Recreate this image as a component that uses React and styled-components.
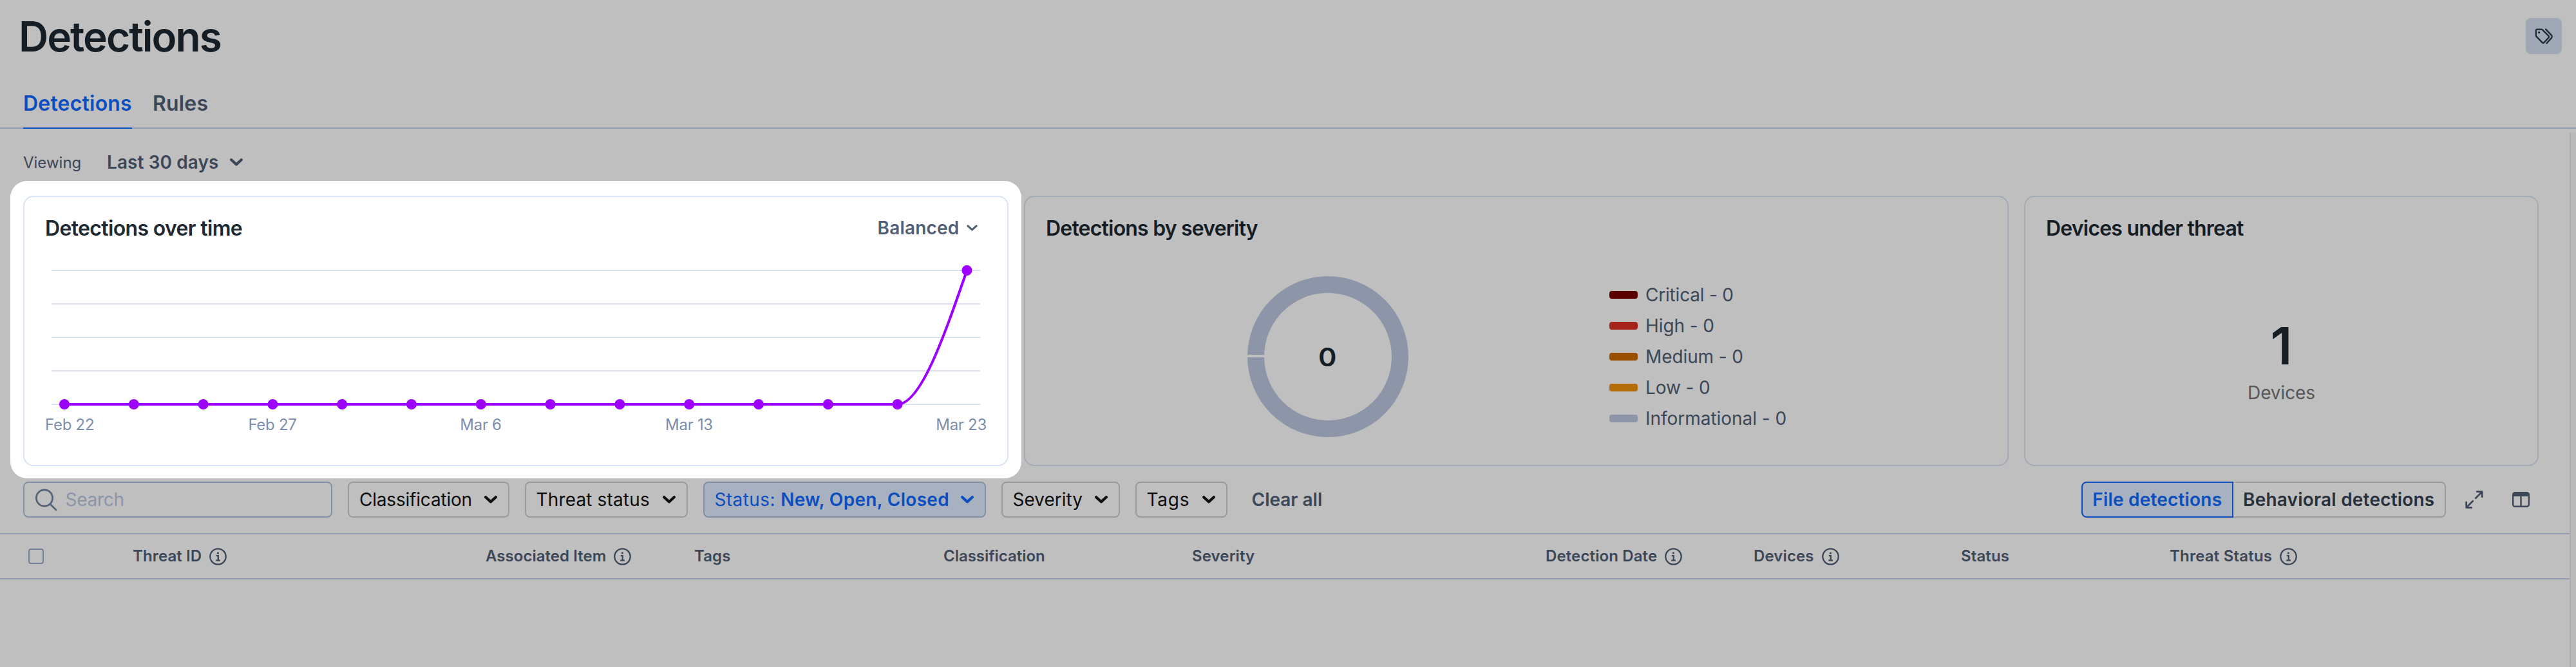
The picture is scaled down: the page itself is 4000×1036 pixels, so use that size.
import React from "react";
import styled, { createGlobalStyle } from "styled-components";

const color = {
  ink: "#1e2932",
  slate: "#516075",
  muted: "#7c8ead",
  blue: "#0f69ff",
  blueTint: "#e1edff",
  line: "#c4d3eb",
  cardLine: "#d8e3f3",
  violet: "#9c00ff",
};

const GlobalStyle = createGlobalStyle`
  * { box-sizing: border-box; }
  body {
    margin: 0;
    background: #fff;
    font-family: Inter, "Liberation Sans", sans-serif;
    color: ${color.ink};
    overflow: hidden;
  }
`;

const Page = styled.div`
  position: relative;
  width: 4000px;
  height: 1036px;
  overflow: hidden;
  display: flex;
  flex-direction: column;
`;

const Spotlight = styled.div`
  position: absolute;
  left: 16px;
  top: 281px;
  width: 1570px;
  height: 462px;
  border-radius: 26px;
  box-shadow: 0 0 0 5000px rgba(0, 0, 0, 0.25);
  pointer-events: none;
`;

const Header = styled.header`
  display: flex;
  align-items: center;
  justify-content: space-between;
  height: 112px;
  padding: 0 22px 0 29px;
`;

const Title = styled.h1`
  margin: 1px 0 0;
  font-size: 64px;
  line-height: 78px;
  font-weight: 600;
  letter-spacing: -2px;
`;

const TagButton = styled.button`
  display: flex;
  align-items: center;
  justify-content: center;
  width: 56px;
  height: 56px;
  padding: 0;
  border: 0;
  border-radius: 8px;
  background: #d4e0f0;
  color: #2f3b49;
`;

const Tabs = styled.nav`
  display: flex;
  gap: 32px;
  height: 88px;
  padding: 0 36px;
  box-shadow: inset 0 -2px ${color.line};
`;

const Tab = styled.a`
  display: flex;
  align-items: center;
  padding-top: 10px;
  border-bottom: 2px solid ${(p) => (p.$active ? color.blue : "transparent")};
  color: ${(p) => (p.$active ? color.blue : color.slate)};
  font-size: 32px;
  font-weight: 600;
  letter-spacing: 0.2px;
`;

const Body = styled.div`
  display: flex;
  flex: 1;
`;

const Main = styled.main`
  width: 3990px;
`;

const ScrollTrack = styled.div`
  flex: 1;
  margin-top: 6px;
  border-left: 2px solid #e8e8e8;
  background: #fafafa;
`;

const ViewingBar = styled.div`
  display: flex;
  align-items: center;
  height: 104px;
  padding-left: 36px;
  color: ${color.slate};
`;

const ViewingLabel = styled.span`
  width: 130px;
  font-size: 24px;
`;

const RangeSelect = styled.div`
  display: flex;
  align-items: center;
  gap: 18px;
  font-size: 28px;
  font-weight: 600;
  letter-spacing: 0.08px;
`;

const Cards = styled.section`
  display: grid;
  grid-template-columns: 1530px 1529px 799px;
  column-gap: 24px;
  height: 420px;
  padding-left: 36px;
`;

const Card = styled.article`
  border: 2px solid ${color.cardLine};
  border-radius: 16px;
`;

const CardHeader = styled.div`
  display: flex;
  align-items: center;
  justify-content: space-between;
  height: 96px;
  padding: 0 46px 0 32px;
`;

const CardTitle = styled.h2`
  margin: 0;
  font-size: 32px;
  font-weight: 600;
  letter-spacing: ${(p) => p.$spacing}px;
`;

const ModeSelect = styled.div`
  display: flex;
  align-items: center;
  gap: 11.5px;
  color: #4f5f75;
  font-size: 28px;
  font-weight: 600;
  letter-spacing: 0.2px;
`;

const ChartSvg = styled.svg`
  display: block;
`;

const AxisText = styled.text`
  font-size: 24px;
  letter-spacing: -0.28px;
  fill: ${color.muted};
`;

const SeverityBody = styled.div`
  display: flex;
  align-items: center;
  height: 304px;
  padding-left: 345px;
`;

const Donut = styled.div`
  display: flex;
  align-items: center;
  justify-content: center;
  width: 250px;
  height: 250px;
  border: 26px solid #bcc9e0;
  border-radius: 50%;
  font-size: 40px;
  font-weight: 600;
  position: relative;

  &::before {
    content: "";
    position: absolute;
    left: -28px;
    top: 96px;
    width: 30px;
    height: 4px;
    background: #fff;
  }
`;

const DonutValue = styled.span`
  transform: scaleX(1.08);
  margin-right: 2px;
`;

const Legend = styled.ul`
  margin: 0 0 0 312px;
  padding: 0;
  list-style: none;
`;

const LegendItem = styled.li`
  display: flex;
  align-items: center;
  gap: 12px;
  height: 48px;
  color: ${color.slate};
  font-size: 28px;
  letter-spacing: ${(p) => p.$spacing || 0}px;
`;

const Swatch = styled.i`
  width: 44px;
  height: 12px;
  border-radius: 4px;
  background: ${(p) => p.$fill};
`;

const DeviceBody = styled.div`
  display: flex;
  flex-direction: column;
  align-items: center;
  gap: 16px;
  padding-top: 95px;
`;

const DeviceCount = styled.strong`
  font-size: 80px;
  line-height: 80px;
  font-weight: 600;
`;

const DeviceLabel = styled.span`
  color: #737373;
  font-size: 28px;
  line-height: 34px;
  letter-spacing: -0.12px;
`;

const Filters = styled.div`
  display: flex;
  align-items: center;
  gap: 24px;
  height: 104px;
  padding: 0 62px 0 36px;
`;

const SearchBox = styled.div`
  display: flex;
  align-items: center;
  gap: 12.5px;
  width: 480px;
  height: 56px;
  padding-left: 16px;
  border: 2px solid #b1c3df;
  border-radius: 8px;
  color: #7185a0;
`;

const Placeholder = styled.span`
  color: #b9c8e2;
  font-size: 28px;
  letter-spacing: -0.25px;
`;

const FilterButton = styled.button`
  display: flex;
  align-items: center;
  justify-content: space-between;
  width: ${(p) => p.$width}px;
  height: 56px;
  padding: 0 16.5px 0 16px;
  border: 2px solid ${(p) => (p.$active ? "#b0c0dc" : "#cdd0d2")};
  border-radius: 8px;
  background: ${(p) => (p.$active ? color.blueTint : "transparent")};
  color: ${(p) => (p.$active ? color.blue : "#121212")};
  font: 400 28px Inter, sans-serif;
  letter-spacing: ${(p) => p.$spacing || 0}px;
  white-space: nowrap;

  b {
    font-weight: 600;
    letter-spacing: 0.3px;
  }
`;

const ClearAll = styled.button`
  padding: 0 0 0 14px;
  border: 0;
  background: none;
  color: ${color.slate};
  font: 600 28px Inter, sans-serif;
  letter-spacing: 0;
`;

const Actions = styled.div`
  display: flex;
  align-items: center;
  margin-left: auto;
  color: ${color.slate};
`;

const Toggle = styled.div`
  display: flex;
  height: 56px;
  margin-right: 30px;
`;

const ToggleOption = styled.button`
  width: ${(p) => p.$width}px;
  padding: 0;
  border: 2px solid ${(p) => (p.$active ? color.blue : "#cfcfd2")};
  border-left-width: ${(p) => (p.$active ? 2 : 0)}px;
  border-radius: ${(p) => (p.$active ? "8px 0 0 8px" : "0 8px 8px 0")};
  background: ${(p) => (p.$active ? color.blueTint : "transparent")};
  color: ${(p) => (p.$active ? color.blue : "#35414f")};
  font: 600 28px Inter, sans-serif;
  letter-spacing: 0.2px;
`;

const ExpandSlot = styled.span`
  display: flex;
  margin-right: 45px;
`;

const TableHead = styled.div`
  display: grid;
  grid-template-columns: 206px 548px 324px 387px 386px 549px 323px 322px 324px 1fr;
  align-items: center;
  height: 72px;
  border-top: 2px solid ${color.line};
  border-bottom: 2px solid ${color.line};
`;

const Checkbox = styled.span`
  width: 24px;
  height: 24px;
  margin-left: 44px;
  border: 2px solid #98abc7;
  border-radius: 4px;
`;

const ColumnHead = styled.span`
  display: flex;
  align-items: center;
  gap: 12px;
  color: ${color.slate};
  font-size: 24px;
  line-height: 28px;
  font-weight: 600;
  letter-spacing: ${(p) => (p.$spacing ?? 0.12)}px;
`;

const Chevron = ({ small }) => (
  <svg width={small ? 17 : 20} height={small ? 10.2 : 12} viewBox="0 0 20 12" fill="none">
    <path
      d="M2.2 2.2 10 9.4l7.8-7.2"
      stroke="currentColor"
      strokeWidth={small ? 3.6 : 4.2}
      strokeLinecap="round"
      strokeLinejoin="round"
    />
  </svg>
);

const TagsIcon = () => (
  <svg width="28" height="25" viewBox="0 0 28 25" fill="none" stroke="currentColor" strokeWidth="2.4" strokeLinecap="round" strokeLinejoin="round">
    <path d="M3.8 1.6h6.6a2 2 0 0 1 1.4.6l9.5 9.4a2.2 2.2 0 0 1 0 3.1L14.5 21.9a2.2 2.2 0 0 1-3.1 0L2.4 12.6a2 2 0 0 1-.6-1.4V3.6a2 2 0 0 1 2-2z" />
    <circle cx="6.6" cy="6.4" r="1.6" fill="currentColor" stroke="none" />
    <path d="m17.2 1.6 8.4 8.8a3.6 3.6 0 0 1 0 5L18.4 23.2" />
  </svg>
);

const SearchIcon = () => (
  <svg width="35" height="35" viewBox="0 0 35 35" fill="none" stroke="currentColor" strokeWidth="2.8" strokeLinecap="round">
    <circle cx="15" cy="14.5" r="12.6" />
    <path d="m24 24 9 9" />
  </svg>
);

const InfoIcon = () => (
  <svg width="27" height="27" viewBox="0 0 27 27" fill="none" stroke="currentColor" strokeWidth="2.3">
    <circle cx="13.5" cy="13.5" r="12.2" />
    <circle cx="13.4" cy="8" r="1.6" fill="currentColor" stroke="none" />
    <path d="M10.8 12.2h3v7.2M10.3 19.4h6.6" />
  </svg>
);

const ExpandIcon = () => (
  <svg width="28" height="28" viewBox="0 0 28 28" fill="none" stroke="currentColor" strokeWidth="2.7" strokeLinecap="round" strokeLinejoin="round">
    <path d="M16.2 11.8 26 2M18.2 1.7h8.1v8.1" />
    <path d="M11.8 16.2 2 26M9.8 26.3H1.7v-8.1" />
  </svg>
);

const ColumnsIcon = () => (
  <svg width="27" height="24" viewBox="0 0 27 24" fill="none" stroke="currentColor" strokeWidth="2.4">
    <rect x="1.2" y="1.2" width="24.6" height="21.6" rx="3" />
    <path d="M1.4 3.6a2 2 0 0 1 2-2h20.2a2 2 0 0 1 2 2v3.3H1.4z" fill="currentColor" stroke="none" />
    <path d="M13.5 6v16" />
  </svg>
);

const FIRST_X = 62;
const STEP = 107.8;
const BASE_Y = 226;
const TOP_Y = 18;
const points = Array.from({ length: 14 }, (_, i) => ({
  x: FIRST_X + STEP * i,
  y: i === 13 ? TOP_Y : BASE_Y,
}));
const axisLabels = [
  { text: "Feb 22", x: 32, anchor: "start" },
  { text: "Feb 27", x: 385, anchor: "middle" },
  { text: "Mar 6", x: 708.5, anchor: "middle" },
  { text: "Mar 13", x: 1032, anchor: "middle" },
  { text: "Mar 23", x: 1494, anchor: "end" },
];

const TimeChart = () => {
  const knee = points[12];
  const peak = points[13];
  const third = STEP / 3;
  return (
    <ChartSvg width="1526" height="300" viewBox="0 0 1526 300">
      {[18, 70, 122, 174, 226].map((y) => (
        <line key={y} x1="42" x2="1484" y1={y} y2={y} stroke="#d9e1ef" strokeWidth="2" />
      ))}
      <path
        d={`M${FIRST_X} ${BASE_Y}H${knee.x}C${knee.x + third} ${BASE_Y} ${peak.x - third} ${TOP_Y + 104} ${peak.x} ${TOP_Y}`}
        fill="none"
        stroke={color.violet}
        strokeWidth="4"
      />
      {points.map((p) => (
        <circle key={p.x} cx={p.x} cy={p.y} r="8" fill={color.violet} />
      ))}
      {axisLabels.map((l) => (
        <AxisText key={l.text} x={l.x} y="266" textAnchor={l.anchor}>
          {l.text}
        </AxisText>
      ))}
    </ChartSvg>
  );
};

const severities = [
  { label: "Critical - 0", fill: "#7a0000", spacing: -0.2 },
  { label: "High - 0", fill: "#dc2f25", spacing: -0.1 },
  { label: "Medium - 0", fill: "#cc6d00", spacing: -0.1 },
  { label: "Low - 0", fill: "#ef930d", spacing: -0.1 },
  { label: "Informational - 0", fill: "#bcc9e0", spacing: -0.03 },
];

const columns = [
  { label: "Threat ID", info: true },
  { label: "Associated Item", info: true, spacing: 0.04 },
  { label: "Tags" },
  { label: "Classification", spacing: -0.04 },
  { label: "Severity" },
  { label: "Detection Date", info: true },
  { label: "Devices", info: true },
  { label: "Status" },
  { label: "Threat Status", info: true, spacing: 0.2 },
];

export default function App() {
  return (
    <Page>
      <GlobalStyle />
      <Header>
        <Title>Detections</Title>
        <TagButton aria-label="Tags">
          <TagsIcon />
        </TagButton>
      </Header>
      <Tabs>
        <Tab $active>Detections</Tab>
        <Tab>Rules</Tab>
      </Tabs>
      <Body>
        <Main>
          <ViewingBar>
            <ViewingLabel>Viewing</ViewingLabel>
            <RangeSelect>
              Last 30 days
              <Chevron />
            </RangeSelect>
          </ViewingBar>
          <Cards>
            <Card>
              <CardHeader>
                <CardTitle $spacing={-0.65}>Detections over time</CardTitle>
                <ModeSelect>
                  Balanced
                  <Chevron small />
                </ModeSelect>
              </CardHeader>
              <TimeChart />
            </Card>
            <Card>
              <CardHeader>
                <CardTitle $spacing={-0.8}>Detections by severity</CardTitle>
              </CardHeader>
              <SeverityBody>
                <Donut>
                  <DonutValue>0</DonutValue>
                </Donut>
                <Legend>
                  {severities.map((s) => (
                    <LegendItem key={s.label} $spacing={s.spacing}>
                      <Swatch $fill={s.fill} />
                      {s.label}
                    </LegendItem>
                  ))}
                </Legend>
              </SeverityBody>
            </Card>
            <Card>
              <CardHeader>
                <CardTitle $spacing={-0.8}>Devices under threat</CardTitle>
              </CardHeader>
              <DeviceBody>
                <DeviceCount>1</DeviceCount>
                <DeviceLabel>Devices</DeviceLabel>
              </DeviceBody>
            </Card>
          </Cards>
          <Filters>
            <SearchBox>
              <SearchIcon />
              <Placeholder>Search</Placeholder>
            </SearchBox>
            <FilterButton $width={250.5} $spacing={-0.2}>
              Classification
              <Chevron />
            </FilterButton>
            <FilterButton $width={253} $spacing={0.15}>
              Threat status
              <Chevron />
            </FilterButton>
            <FilterButton $width={439} $spacing={0.4} $active>
              <span>
                Status: <b>New, Open, Closed</b>
              </span>
              <Chevron />
            </FilterButton>
            <FilterButton $width={184}>
              Severity
              <Chevron />
            </FilterButton>
            <FilterButton $width={143} $spacing={0.8}>
              Tags
              <Chevron />
            </FilterButton>
            <ClearAll>Clear all</ClearAll>
            <Actions>
              <Toggle>
                <ToggleOption $width={235.5} $active>
                  File detections
                </ToggleOption>
                <ToggleOption $width={330.5}>Behavioral detections</ToggleOption>
              </Toggle>
              <ExpandSlot>
                <ExpandIcon />
              </ExpandSlot>
              <ColumnsIcon />
            </Actions>
          </Filters>
          <TableHead>
            <Checkbox />
            {columns.map((c) => (
              <ColumnHead key={c.label} $spacing={c.spacing}>
                {c.label}
                {c.info && <InfoIcon />}
              </ColumnHead>
            ))}
          </TableHead>
        </Main>
        <ScrollTrack />
      </Body>
      <Spotlight />
    </Page>
  );
}
